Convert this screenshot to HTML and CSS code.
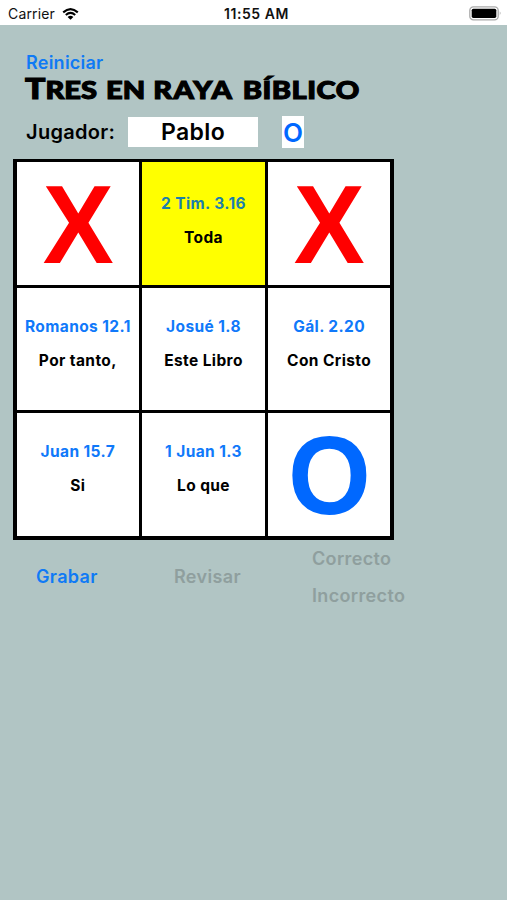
FILE: index.html
```html
<!DOCTYPE html>
<html lang="es">
<head>
    <meta charset="UTF-8">
    <title>Tres en raya bíblico</title>
    <link rel="stylesheet" href="styles.css">
</head>
<body>
    <div class="status">
        <div class="carrier">
            <span>Carrier</span>
            <svg class="wifi" viewBox="0 0 17 12">
                <path d="M1.2 4.4Q8.5-2 15.8 4.4M3.8 7Q8.5 2.9 13.2 7" fill="none" stroke="#000" stroke-width="2.1"/>
                <path d="M5.6 8.9Q8.5 6.4 11.4 8.9L8.5 11.8Z"/>
            </svg>
        </div>
        <div class="time">11:55 AM</div>
        <svg class="battery" viewBox="0 0 33 15">
            <rect x=".8" y=".8" width="28.4" height="13" rx="3.6" fill="#fff" stroke="#aaa" stroke-width="1.3"/>
            <rect x="2.7" y="2.7" width="24.6" height="9.2" rx="1.6"/>
            <path d="M30.8 5.2Q32.6 7.3 30.8 9.4Z" fill="#999"/>
        </svg>
    </div>
    <div class="main">
        <a class="restart">Reiniciar</a>
        <h1 class="title">
            <span class="w1"><b>T</b>RES</span>
            <span class="w2">EN</span>
            <span class="w3">RAYA</span>
            <span class="w4">BÍBLICO</span>
        </h1>
        <div class="player">
            <span class="label">Jugador:</span>
            <span class="name">Pablo</span>
            <span class="turn">O</span>
        </div>
        <div class="board">
            <div class="cell mark-x"><span>X</span></div>
            <div class="cell selected"><a>2 Tim. 3.16</a><p>Toda</p></div>
            <div class="cell mark-x"><span>X</span></div>
            <div class="cell"><a>Romanos 12.1</a><p>Por tanto,</p></div>
            <div class="cell"><a>Josué 1.8</a><p>Este Libro</p></div>
            <div class="cell"><a>Gál. 2.20</a><p>Con Cristo</p></div>
            <div class="cell"><a>Juan 15.7</a><p>Si</p></div>
            <div class="cell"><a>1 Juan 1.3</a><p>Lo que</p></div>
            <div class="cell mark-o"><span>O</span></div>
        </div>
        <div class="actions">
            <a class="save">Grabar</a>
            <a class="check off">Revisar</a>
            <div class="result off">
                <a class="right">Correcto</a>
                <a class="wrong">Incorrecto</a>
            </div>
        </div>
    </div>
</body>
</html>
```
FILE: styles.css
```css
*{
    padding:0;
    margin:0;
    box-sizing:border-box;
}
body{
    height:900px;
    background:#b1c5c4;
    font-family:Inter, "Liberation Sans", sans-serif;
    font-weight:600;
    color:#000;
    overflow:hidden;
}
.status{
    height:25px;
    background:#fff;
    display:grid;
    grid-template-columns:1fr auto 1fr;
    align-items:center;
    padding:2px 5px 0 8px;
    font-size:14px;
    line-height:23px;
    color:#111;
}
.carrier{
    display:flex;
    align-items:center;
    gap:7px;
    font-weight:400;
    letter-spacing:.15px;
}
.wifi{
    width:17px;
    height:12px;
}
.time{
    padding-left:3px;
    letter-spacing:.55px;
}
.battery{
    width:33px;
    height:15px;
    justify-self:end;
}
.main{
    padding:27px 0 0 13px;
}
.restart{
    display:block;
    margin-left:13px;
    height:20px;
    line-height:21px;
    font-size:18px;
    letter-spacing:.25px;
    color:#0f7af5;
}
.title{
    display:flex;
    align-items:baseline;
    width:300px;
    margin-left:12px;
    height:32px;
    line-height:32px;
    font-family:Lato, sans-serif;
    font-weight:900;
    font-size:24px;
    -webkit-text-stroke:1.1px #000;
    transform:scaleX(1.21);
    transform-origin:left;
}
.title b{
    font-size:28px;
    font-weight:900;
}
.w1{
    width:67px;
}
.w2{
    width:39px;
}
.w3{
    width:74px;
    letter-spacing:1.2px;
}
.w4{
    letter-spacing:.4px;
}
.player{
    display:flex;
    align-items:center;
    height:32px;
    margin:12px 0 10.5px 13px;
}
.label{
    width:102px;
    font-size:20px;
    letter-spacing:.3px;
}
.name{
    width:130px;
    height:30px;
    line-height:30px;
    background:#fff;
    text-align:center;
    font-size:23px;
    letter-spacing:.4px;
}
.turn{
    width:22px;
    height:32px;
    line-height:33px;
    margin-left:24px;
    background:#fff;
    text-align:center;
    font-size:26px;
    color:#0068ff;
}
.board{
    display:grid;
    grid-template-columns:repeat(3, minmax(0, 1fr));
    grid-template-rows:repeat(3, minmax(0, 1fr));
    gap:3px;
    width:381px;
    height:381px;
    padding:3.5px;
    background:#000;
}
.cell{
    background:#fff;
    text-align:center;
    font-size:15.5px;
    font-weight:650;
    line-height:20px;
    padding-top:29px;
    letter-spacing:.4px;
    white-space:nowrap;
}
.cell a{
    color:#1079fa;
}
.cell p{
    margin-top:14px;
}
.selected{
    background:#ff0;
    padding-top:32px;
}
.selected a{
    color:#1b7fad;
}
.mark-x, .mark-o{
    padding-top:0;
    font-family:"Liberation Sans", sans-serif;
    font-weight:700;
    font-size:112px;
    line-height:125px;
    letter-spacing:0;
    color:#f00;
}
.mark-o{
    color:#0068ff;
}
.mark-x span, .mark-o span{
    display:block;
    transform:scaleX(.95);
}
.actions{
    display:flex;
    font-size:18px;
    line-height:24px;
    letter-spacing:.35px;
}
.save{
    width:138px;
    margin:25px 0 0 23px;
    color:#0f7af5;
}
.check{
    width:138px;
    margin-top:25px;
}
.off{
    color:#8f9f9e;
}
.result{
    display:flex;
    flex-direction:column;
    gap:13px;
    margin-top:7px;
}
```
